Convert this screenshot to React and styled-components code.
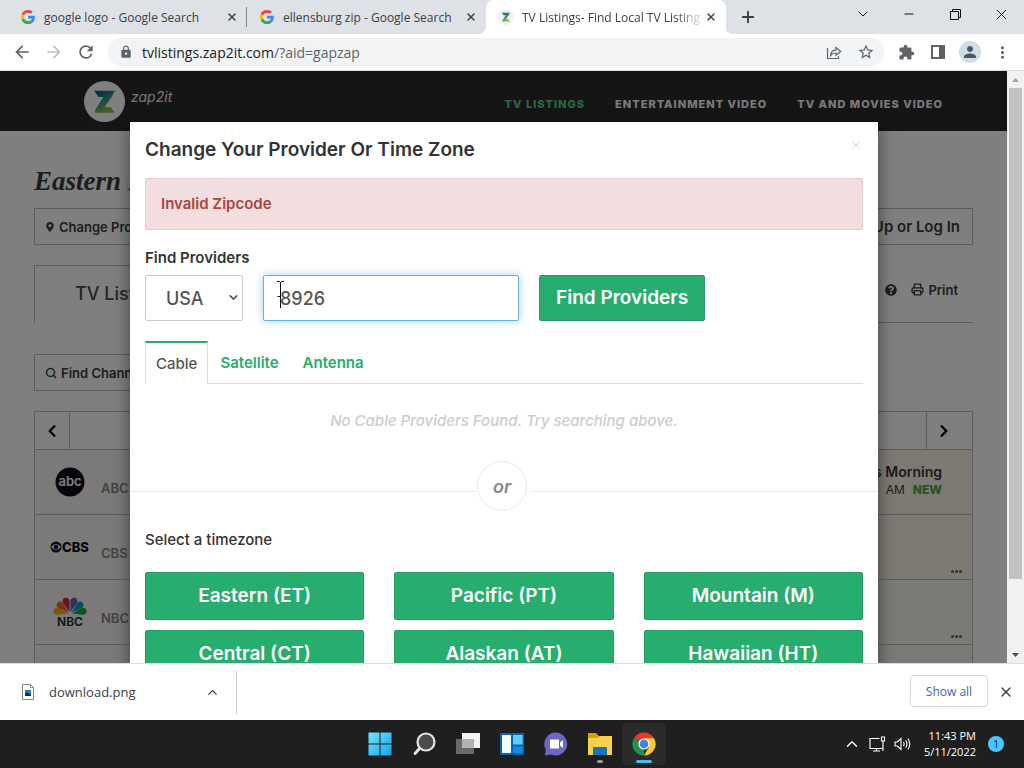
import React from "react";
import styled, { createGlobalStyle, css } from "styled-components";
import { Search, Printer, X, Plus, ChevronDown, ChevronUp, Minus } from "lucide-react";
import { MdArrowBack, MdArrowForward, MdRefresh, MdLock, MdStarBorder, MdExtension, MdMoreVert, MdPerson } from "react-icons/md";
import { FaMapMarkerAlt, FaQuestionCircle, FaChevronLeft, FaChevronRight } from "react-icons/fa";

const brandFont = `Inter, "Liberation Sans", sans-serif`;
const systemFont = `"Open Sans", "Noto Sans", sans-serif`;
const green = "#27ae6e";

const GlobalStyle = createGlobalStyle`
  *, *::before, *::after { box-sizing: border-box; }
  body { margin: 0; background: #fff; }
  button, input, select { font: inherit; color: inherit; margin: 0; }
  button { padding: 0; border: 0; background: none; }
  svg { display: block; flex: none; }
  h1, h2, p { margin: 0; }
  a { color: inherit; text-decoration: none; }
`;

const Desktop = styled.div`
  display: flex;
  flex-direction: column;
  height: 100vh;
  font-family: ${systemFont};
  color: #3c4043;
`;

/* ---------- browser frame ---------- */

const TabStrip = styled.div`
  display: flex;
  flex: none;
  height: 34px;
  padding-left: 8px;
  background: #dee1e6;
`;

const BrowserTab = styled.div`
  position: relative;
  display: flex;
  align-items: center;
  flex: 0 1 239px;
  min-width: 0;
  padding: 0 8px 0 12px;
  font-size: 12px;
  border-right: 1px solid transparent;
  ${(p) =>
    p.$divided &&
    css`
      border-image: linear-gradient(transparent 8px, #84878c 8px, #84878c 26px, transparent 26px) 1;
    `}
  ${(p) =>
    p.$active &&
    css`
      flex-basis: 240px;
      background: #fff;
      border-radius: 8px 8px 0 0;
      &::before, &::after {
        content: "";
        position: absolute;
        bottom: 0;
        width: 8px;
        height: 8px;
      }
      &::before { left: -8px; background: radial-gradient(circle at 0 0, transparent 8px, #fff 8px); }
      &::after { right: -8px; background: radial-gradient(circle at 100% 0, transparent 8px, #fff 8px); }
    `}
`;

const TabTitle = styled.span`
  flex: 1;
  min-width: 0;
  padding-left: 8px;
  overflow: hidden;
  white-space: nowrap;
  ${(p) => p.$faded && css`mask-image: linear-gradient(90deg, #000 84%, transparent);`}
`;

const NewTab = styled.button`
  display: grid;
  place-items: center;
  width: 44px;
  color: #3c4043;
`;

const WindowControls = styled.div`
  display: flex;
  margin-left: auto;
  height: 28px;
  color: #111;
`;

const WindowButton = styled.button`
  display: grid;
  place-items: center;
  width: 46px;
`;

const Toolbar = styled.div`
  display: flex;
  align-items: center;
  gap: 6px;
  flex: none;
  height: 37px;
  padding: 0 6px;
  border-bottom: 1px solid #dadce0;
  color: #5f6368;
`;

const ButtonGroup = styled.div`
  display: flex;
`;

const ToolButton = styled.button`
  display: grid;
  place-items: center;
  width: 32px;
  height: 28px;
  color: ${(p) => (p.$dim ? "#bdc1c6" : "#5f6368")};
`;

const Omnibox = styled.div`
  display: flex;
  align-items: center;
  flex: 1;
  height: 28px;
  padding: 0 2px 0 11px;
  border-radius: 14px;
  background: #f1f3f4;
`;

const Address = styled.span`
  flex: 1;
  padding-left: 9px;
  font-size: 14px;
  color: #5f6368;
  b { font-weight: 400; color: #202124; }
`;

const Avatar = styled.span`
  display: grid;
  place-items: center;
  width: 22px;
  height: 22px;
  border-radius: 50%;
  background: #d3dce3;
  color: #47576a;
`;

const Viewport = styled.div`
  display: flex;
  flex: 1;
  min-height: 0;
`;

const Scrollbar = styled.div`
  display: flex;
  flex-direction: column;
  align-items: center;
  flex: none;
  width: 17px;
  background: #f1f1f1;
`;

const ScrollArrow = styled.div`
  display: grid;
  place-items: center;
  width: 17px;
  height: 17px;
  color: ${(p) => (p.$muted ? "#a3a3a3" : "#505050")};
`;

const ScrollTrack = styled.div`
  flex: 1;
  width: 13px;
`;

const ScrollThumb = styled.div`
  height: 88%;
  background: #c1c1c1;
`;

/* ---------- listings page ---------- */

const Stage = styled.div`
  position: relative;
  flex: 1;
  min-width: 0;
  overflow: hidden;
  font-family: ${brandFont};
`;

const SiteHeader = styled.header`
  display: flex;
  justify-content: space-between;
  height: 60px;
  padding: 0 64px 0 84px;
  background: #2a2a2a;
`;

const Brand = styled.a`
  display: flex;
  gap: 6px;
  padding-top: 10px;
  font-size: 14px;
  line-height: 32px;
  font-style: italic;
  color: #eee;
`;

const Nav = styled.nav`
  display: flex;
  align-items: center;
  gap: 30px;
  padding-top: 6px;
  font-size: 11px;
  font-weight: 800;
  letter-spacing: 1px;
`;

const NavLink = styled.a`
  white-space: nowrap;
  color: ${(p) => (p.$current ? "#58d082" : "#f4f4f4")};
`;

const PageBody = styled.main`
  padding: 34px 34px 0;
  color: #3a3a3a;
`;

const PageTitle = styled.h1`
  height: 32px;
  font: italic 700 27px/32px "Liberation Serif", serif;
  white-space: nowrap;
`;

const ActionRow = styled.div`
  display: flex;
  justify-content: space-between;
  margin-top: 11px;
`;

const OutlineButton = styled.button`
  display: flex;
  align-items: center;
  gap: 4px;
  height: 37px;
  padding: 0 12px 0 10px;
  border: 1px solid #bbb;
  font-size: ${(p) => (p.$large ? 15 : 13)}px;
  font-weight: 600;
`;

const SectionTabs = styled.div`
  display: flex;
  height: 58px;
  margin-top: 20px;
`;

const SectionTab = styled.div`
  width: 180px;
  padding-left: 40px;
  border: 1px solid #bbb;
  border-bottom: 0;
  font-size: 18px;
  font-weight: 500;
  line-height: 56px;
  color: #4a4a4a;
`;

const SectionTools = styled.div`
  display: flex;
  justify-content: flex-end;
  align-items: center;
  gap: 14px;
  flex: 1;
  padding: 0 15px 8px 0;
  border-bottom: 1px solid #bbb;
  font-size: 13px;
  font-weight: 600;
`;

const Tool = styled.button`
  display: flex;
  align-items: center;
  gap: 4px;
`;

const FinderRow = styled.div`
  display: flex;
  margin: 31px 0 20px;
`;

const Guide = styled.table`
  width: 100%;
  table-layout: fixed;
  border-collapse: collapse;
  td, th { padding: 0; border: 1px solid #bbb; font-weight: 400; }
`;

const GuideHead = styled.tr`
  height: 38px;
  button { display: flex; width: 34px; justify-content: center; color: #000; }
`;

const GuideRow = styled.tr`
  height: 65px;
`;

const ChannelHead = styled.th`
  background: #f6f5f2;
`;

const Channel = styled.div`
  display: flex;
  align-items: center;
  gap: 10px;
  padding-left: 14px;
  height: 64px;
  font-size: 13px;
  font-weight: 600;
  color: #888;
  span { padding-top: 12px; }
`;

const ShowCell = styled.td`
  background: ${(p) => (p.$warm ? "#f9f4e6" : "#f5f4ef")};
`;

const Show = styled.div`
  display: flex;
  flex-direction: column;
  align-items: flex-end;
  height: 64px;
  padding: 13px 30px 0 0;
  font-size: 14px;
  line-height: 18px;
  font-weight: 600;
`;

const ShowTime = styled.div`
  display: flex;
  gap: 8px;
  font-size: 12px;
  font-weight: 400;
  b { font-weight: 800; color: #48a848; }
`;

const More = styled.div`
  display: flex;
  justify-content: flex-end;
  align-items: flex-end;
  gap: 1px;
  height: 64px;
  padding: 0 10px 6px 0;
  i { width: 3px; height: 3px; border-radius: 50%; background: #3b7352; }
`;

/* ---------- provider dialog ---------- */

const Backdrop = styled.div`
  position: absolute;
  inset: 0;
  display: flex;
  justify-content: center;
  padding: 51px 129px 0 130px;
  background: rgba(0, 0, 0, 0.5);
`;

const Dialog = styled.section`
  flex: 1;
  max-width: 900px;
  height: max-content;
  padding: 0 15px 30px;
  background: #fff;
  box-shadow: 0 5px 15px rgba(0, 0, 0, 0.5);
  color: #333;
`;

const DialogHeader = styled.div`
  display: flex;
  justify-content: space-between;
  height: 56px;
  h2 { font-size: 19px; font-weight: 600; line-height: 56px; }
`;

const CloseButton = styled.button`
  height: 46px;
  color: #ccc;
`;

const Alert = styled.div`
  height: 52px;
  padding: 0 15px;
  border: 1px solid #ebccd1;
  background: #f2dede;
  color: #a94442;
  font-size: 15px;
  font-weight: 600;
  line-height: 50px;
`;

const FieldLabel = styled.label`
  display: block;
  padding-top: 18px;
  font-size: 15px;
  font-weight: 600;
  line-height: 20px;
`;

const SearchForm = styled.form`
  display: flex;
  gap: 20px;
  margin-top: 7px;
  height: 46px;
  font-size: 18px;
  color: #555;
`;

const SelectWrap = styled.div`
  position: relative;
  width: 98px;
  select {
    appearance: none;
    width: 100%;
    height: 100%;
    padding: 0 20px;
    border: 1px solid #ccc;
    border-radius: 2px;
    background: #fff;
    font-weight: 500;
  }
  svg { position: absolute; right: 3px; top: 16px; }
`;

const ZipWrap = styled.div`
  position: relative;
  width: 256px;
  input {
    width: 100%;
    height: 100%;
    padding: 0 16px;
    border: 1px solid #66afe9;
    border-radius: 2px;
    outline: 0;
    box-shadow: 0 0 8px rgba(102, 175, 233, 0.6);
    font-weight: 500;
  }
  svg { position: absolute; left: 13px; top: 6px; }
`;

const GreenButton = styled.button`
  height: ${(p) => (p.$compact ? 46 : 48)}px;
  padding: 0 16px;
  border: 1px solid #249c63;
  border-radius: 2px;
  background: ${green};
  color: #fff;
  font-size: 19px;
  font-weight: 600;
  line-height: 20px;
  white-space: nowrap;
`;

const ProviderTabs = styled.div`
  display: flex;
  height: 43px;
  margin-top: 20px;
  border-bottom: 1px solid #ddd;
`;

const ProviderTab = styled.button`
  padding: 0 12px;
  color: ${green};
  font-size: 15px;
  font-weight: 600;
  ${(p) =>
    p.$active &&
    css`
      height: 43px;
      padding: 0 10px;
      border: 1px solid #ddd;
      border-top: 2px solid ${green};
      border-bottom: 0;
      background: #fff;
      color: #555;
      font-weight: 500;
    `}
`;

const Empty = styled.p`
  padding: 27px 0 30px;
  font-size: 15px;
  font-style: italic;
  font-weight: 500;
  line-height: 20px;
  text-align: center;
  color: #ccc;
`;

const Divider = styled.div`
  display: flex;
  align-items: center;
  margin: 0 -15px 1px;
  padding-right: 4px;
  &::before, &::after {
    content: "";
    flex: 1;
    margin-top: 10px;
    border-top: 1px solid #e8e8e8;
  }
  &::after { margin-right: -4px; }
`;

const OrBadge = styled.span`
  width: 50px;
  height: 50px;
  margin-right: 4px;
  border: 1px solid #e8e8e8;
  border-radius: 50%;
  font-size: 18px;
  font-style: italic;
  font-weight: 600;
  line-height: 50px;
  text-align: center;
  color: #888;
  box-shadow: 4px 0 #fff;
`;

const ZoneHeading = styled(FieldLabel).attrs({ as: "h2" })`
  margin-bottom: 22px;
  font-weight: 500;
`;

const ZoneGrid = styled.div`
  display: grid;
  grid-template-columns: repeat(3, 1fr);
  gap: 10px 30px;
`;

/* ---------- downloads shelf and task bar ---------- */

const Shelf = styled.div`
  display: flex;
  align-items: center;
  flex: none;
  height: 57px;
  padding-right: 10px;
  border-top: 1px solid #dadce0;
  background: #fff;
`;

const Download = styled.div`
  display: flex;
  align-items: center;
  gap: 14px;
  width: 237px;
  height: 43px;
  padding: 0 16px 0 21px;
  border-right: 1px solid #c8cace;
  font-size: 13px;
  span { flex: 1; }
`;

const ShowAll = styled.button`
  width: 78px;
  height: 32px;
  margin: 0 10px 2px auto;
  border: 1px solid #d5d8dc;
  border-radius: 4px;
  font-size: 12px;
  font-weight: 500;
  color: #3a66bd;
`;

const TaskBar = styled.footer`
  display: grid;
  grid-template-columns: 1fr auto 1fr;
  align-items: center;
  flex: none;
  height: 48px;
  background: #1f1f1f;
  color: #fff;
`;

const AppRow = styled.div`
  display: flex;
  grid-column: 2;
`;

const AppButton = styled.button`
  position: relative;
  display: grid;
  place-items: center;
  width: 44px;
  height: 42px;
  border-radius: 4px;
  background: ${(p) => (p.$mark === "active" ? "#2b2b2b" : "none")};
  &::after {
    content: "";
    position: absolute;
    bottom: 2px;
    left: 50%;
    width: ${(p) => (p.$mark === "active" ? 16 : 6)}px;
    height: 3px;
    border-radius: 2px;
    transform: translateX(-50%);
    background: ${(p) => ({ active: "#56b5e8", open: "#9a9a9a" })[p.$mark] || "none"};
  }
`;

const Tray = styled.div`
  display: flex;
  justify-content: flex-end;
  align-items: center;
  gap: 8px;
  padding-right: 20px;
`;

const Clock = styled.div`
  padding: 0 4px 0 5px;
  font-size: 11px;
  line-height: 16px;
  text-align: right;
`;

const Notice = styled.span`
  width: 16px;
  height: 16px;
  border-radius: 50%;
  background: #4cc2ff;
  color: #123;
  font-size: 10px;
  line-height: 16px;
  text-align: center;
`;

/* ---------- drawings ---------- */

const GoogleIcon = () => (
  <svg width="16" height="16" viewBox="-3 -3 54 54">
    <path fill="#ea4335" d="M24 9.5c3.54 0 6.71 1.22 9.21 3.6l6.85-6.85C35.9 2.38 30.47 0 24 0 14.62 0 6.51 5.38 2.56 13.22l7.98 6.19C12.43 13.72 17.74 9.5 24 9.5z" />
    <path fill="#4285f4" d="M46.98 24.55c0-1.57-.15-3.09-.38-4.55H24v9.02h12.94c-.58 2.96-2.26 5.48-4.78 7.18l7.73 6c4.51-4.18 7.09-10.36 7.09-17.65z" />
    <path fill="#fbbc05" d="M10.53 28.59A14.5 14.5 0 0 1 9.77 24c0-1.6.27-3.14.76-4.59l-7.98-6.19A23.9 23.9 0 0 0 0 24c0 3.88.92 7.54 2.56 10.78z" />
    <path fill="#34a853" d="M24 48c6.48 0 11.93-2.13 15.89-5.81l-7.73-6c-2.15 1.45-4.92 2.3-8.16 2.3-6.26 0-11.57-4.22-13.47-9.91l-7.98 6.19C6.51 42.62 14.62 48 24 48z" />
  </svg>
);

const ZapIcon = ({ size, small }) => (
  <svg width={size} height={size} viewBox="0 0 40 40">
    <circle cx="20" cy="20" r="20" fill={small ? "#f1f3f2" : "#fff"} />
    <defs>
      <linearGradient id="zap" x1="0" y1="0" x2=".5" y2="1">
        <stop offset="0" stopColor="#16468c" />
        <stop offset=".5" stopColor="#249688" />
        <stop offset="1" stopColor="#9bb83c" />
      </linearGradient>
    </defs>
    <path d="M10 9.500h20l-3 6-7 10h6l4 5.500H11v-3l8-12.500h-5z" fill="url(#zap)" />
  </svg>
);

const RestoreIcon = () => (
  <svg width="11" height="11" viewBox="0 0 11 11" fill="none" stroke="currentColor">
    <path d="M.5 2.500h8v8h-8zM2.500 2.500v-2h8v8h-2" />
  </svg>
);

const ShareIcon = () => (
  <svg width="16" height="16" viewBox="0 0 16 16" fill="none" stroke="currentColor" strokeWidth="1.200">
    <path d="M1.500 4v10.500h11V12M4.500 11.500c.4-3.500 2-5.500 5.500-5.700V3.500l4.700 4L10 11.300V9C7.500 9 6 9.700 4.500 11.500z" />
  </svg>
);

const SidePanelIcon = () => (
  <svg width="14" height="14" viewBox="0 0 14 14">
    <path fillRule="evenodd" fill="currentColor" d="M0 0h14v14H0zM2 2v10h6V2z" />
  </svg>
);

const Triangle = ({ down }) => (
  <svg width="7" height="4" viewBox="0 0 7 4">
    <path fill="currentColor" d={down ? "M0 0h7L3.500 4z" : "M0 4h7L3.500 0z"} />
  </svg>
);

const AbcLogo = () => (
  <svg width="42" height="30" viewBox="0 0 42 30">
    <circle cx="21" cy="15" r="14.500" fill="#0b0d18" />
    <text x="21" y="19" textAnchor="middle" fontFamily="Inter" fontWeight="600" fontSize="13" fill="#fff">abc</text>
  </svg>
);

const CbsLogo = () => (
  <svg width="42" height="20" viewBox="0 0 42 20">
    <circle cx="7" cy="10" r="5.500" fill="#0b0d18" />
    <path d="M2 10q5-6 10 0q-5 6-10 0z" fill="#fff" />
    <circle cx="7" cy="10" r="2.300" fill="#0b0d18" />
    <text x="13" y="15" fontFamily="Inter" fontWeight="800" fontSize="13" fill="#0b0d18">CBS</text>
  </svg>
);

const petals = [["#f5b21b", -78], ["#ed6b1f", -48], ["#d6203b", -17], ["#6460aa", 17], ["#1595d3", 48], ["#1ba64a", 78]];

const NbcLogo = () => (
  <svg width="42" height="36" viewBox="0 0 42 36">
    {petals.map(([fill, angle]) => (
      <path key={fill} fill={fill} transform={`rotate(${angle} 21 20)`} d="M21 18l-3.200-10a3.500 3.500 0 1 1 6.400 0z" />
    ))}
    <text x="21" y="32" textAnchor="middle" fontFamily="Inter" fontWeight="600" fontSize="12" fill="#222">NBC</text>
  </svg>
);

const IBeam = () => (
  <svg width="9" height="28" viewBox="0 0 9 28" fill="none" stroke="#111">
    <path d="M1 .5h2.500l1 1 1-1H8M4.500 1v26M1.500 15.500h3" />
  </svg>
);

const FileIcon = () => (
  <svg width="14" height="16" viewBox="0 0 14 16">
    <path d="M1.500.5h8l3 3v12h-11z" fill="#fff" stroke="#8a8a8a" />
    <path d="M9.500.5v3h3" fill="none" stroke="#8a8a8a" />
    <path d="M4 6h6v6H4z" fill="#2b7cd0" />
    <path d="M4 10l2-2 4 3v1H4z" fill="#0c2d5e" />
  </svg>
);

const StartIcon = () => (
  <svg width="24" height="24" viewBox="0 0 24 24">
    <defs>
      <linearGradient id="start" gradientUnits="userSpaceOnUse" x1="0" y1="0" x2="24" y2="24">
        <stop offset="0" stopColor="#7be3fb" />
        <stop offset="1" stopColor="#10a3ee" />
      </linearGradient>
    </defs>
    <path fill="url(#start)" d="M.5.500h11v11H.5zM12.500.500h11v11h-11zM.5 12.500h11v11H.5zM12.500 12.500h11v11h-11z" />
  </svg>
);

const SearchAppIcon = () => (
  <svg width="24" height="24" viewBox="0 0 24 24" stroke="#e4e4e4" strokeLinecap="round">
    <circle cx="14" cy="10" r="8.500" fill="#4b4b4b" strokeWidth="2.200" />
    <path d="M7.500 16.500L3 21.500" strokeWidth="3" />
  </svg>
);

const TaskViewIcon = () => (
  <svg width="24" height="24" viewBox="0 0 24 24">
    <path d="M6 1h18v15H6z" fill="#f3f3f3" />
    <path d="M0 7h18v15H0z" fill="#686868" />
    <path d="M6 7h12v9H6z" fill="#b2b2b2" />
  </svg>
);

const WidgetsIcon = () => (
  <svg width="24" height="24" viewBox="0 0 24 24">
    <path d="M0 1h24v22H0z" fill="#0a63ad" />
    <path d="M2 3h9v18H2z" fill="#f5fbff" />
    <path d="M13 3h9.500v9.500H13z" fill="#5fd0fa" />
    <path d="M13 14.500h9.500V21H13z" fill="#128be0" />
  </svg>
);

const ChatIcon = () => (
  <svg width="24" height="24" viewBox="0 0 24 24">
    <path d="M12 .5A11.500 11.500 0 1 1 7 22.500L.8 23.500 2 18A11.500 11.500 0 0 1 12 .5z" fill="#6d67c4" />
    <path d="M6 7.500h9v9H6zM16 10.500l3-2.500v8l-3-2.500z" fill="#fff" />
  </svg>
);

const FolderIcon = () => (
  <svg width="26" height="24" viewBox="0 0 26 24">
    <path d="M1 1h8l3 3h13v6H1z" fill="#d99b10" />
    <path d="M1 6h9l3-2h12v19H1z" fill="#fad04c" />
    <path d="M6 16q0-1 1-1h12q1 0 1 1v7H6z" fill="#1376bd" />
  </svg>
);

const ChromeIcon = () => (
  <svg width="24" height="24" viewBox="0 0 24 24">
    <path d="M12 12L2 6.200A11.500 11.500 0 0 1 22 6.200z" fill="#e33b2e" />
    <path d="M12 12l0 11.500A11.500 11.500 0 0 1 2 6.200z" fill="#1e9447" />
    <path d="M12 6.200H22A11.500 11.500 0 0 1 12 23.500l5-8.700z" fill="#fcc934" />
    <circle cx="12" cy="12" r="5.600" fill="#fff" />
    <circle cx="12" cy="12" r="4.400" fill="#3f83ee" />
  </svg>
);

const NetworkIcon = () => (
  <svg width="17" height="16" viewBox="0 0 17 16" fill="none" stroke="currentColor" strokeWidth="1.100">
    <path d="M10.500 2.500H1v10h13V8M4 15h7M7.500 12.500V15M12.500 1h3v4h-3zM14 5v10" />
  </svg>
);

const SpeakerIcon = () => (
  <svg width="17" height="16" viewBox="0 0 17 16" fill="none" stroke="currentColor" strokeWidth="1.100">
    <path d="M1 6h2.500L7 2.500v11L3.500 10H1zM9.500 6q1.200 2 0 4M11.700 4.200q2.400 3.800 0 7.600M13.900 2.500q3.600 5.500 0 11" />
  </svg>
);

/* ---------- page ---------- */

const tabs = [
  { title: "google logo - Google Search", icon: <GoogleIcon />, divided: true },
  { title: "ellensburg zip - Google Search", icon: <GoogleIcon /> },
  { title: "TV Listings- Find Local TV Listing", icon: <ZapIcon size={16} small />, active: true },
];

const channels = [
  { name: "ABC", logo: <AbcLogo />, warm: true, show: "America This Morning" },
  { name: "CBS", logo: <CbsLogo />, warm: true },
  { name: "NBC", logo: <NbcLogo /> },
  { name: "", logo: null },
];

const zones = ["Eastern (ET)", "Pacific (PT)", "Mountain (M)", "Central (CT)", "Alaskan (AT)", "Hawaiian (HT)"];

const apps = [
  { name: "Start", icon: <StartIcon /> },
  { name: "Search", icon: <SearchAppIcon /> },
  { name: "Task view", icon: <TaskViewIcon /> },
  { name: "Widgets", icon: <WidgetsIcon /> },
  { name: "Chat", icon: <ChatIcon /> },
  { name: "File Explorer", icon: <FolderIcon />, mark: "open" },
  { name: "Chrome", icon: <ChromeIcon />, mark: "active" },
];

function BrowserFrame() {
  return (
    <>
      <TabStrip>
        {tabs.map((t) => (
          <BrowserTab key={t.title} $active={t.active} $divided={t.divided}>
            {t.icon}
            <TabTitle $faded={t.active}>{t.title}</TabTitle>
            <button aria-label="Close tab"><X size={12} strokeWidth={3} /></button>
          </BrowserTab>
        ))}
        <NewTab aria-label="New tab"><Plus size={18} strokeWidth={2.5} /></NewTab>
        <WindowControls>
          <WindowButton aria-label="Search tabs"><ChevronDown size={16} strokeWidth={1.5} /></WindowButton>
          <WindowButton aria-label="Minimize"><Minus size={14} strokeWidth={1.7} /></WindowButton>
          <WindowButton aria-label="Restore"><RestoreIcon /></WindowButton>
          <WindowButton aria-label="Close"><X size={17} strokeWidth={1.4} /></WindowButton>
        </WindowControls>
      </TabStrip>
      <Toolbar>
        <ButtonGroup>
          <ToolButton aria-label="Back"><MdArrowBack size={20} /></ToolButton>
          <ToolButton aria-label="Forward" $dim><MdArrowForward size={20} /></ToolButton>
          <ToolButton aria-label="Reload"><MdRefresh size={20} /></ToolButton>
        </ButtonGroup>
        <Omnibox>
          <MdLock size={14} />
          <Address><b>tvlistings.zap2it.com</b>/?aid=gapzap</Address>
          <ToolButton aria-label="Share"><ShareIcon /></ToolButton>
          <ToolButton aria-label="Bookmark"><MdStarBorder size={18} /></ToolButton>
        </Omnibox>
        <ButtonGroup>
          <ToolButton aria-label="Extensions"><MdExtension size={17} /></ToolButton>
          <ToolButton aria-label="Side panel"><SidePanelIcon /></ToolButton>
          <ToolButton aria-label="Profile"><Avatar><MdPerson size={18} /></Avatar></ToolButton>
          <ToolButton aria-label="Menu"><MdMoreVert size={19} /></ToolButton>
        </ButtonGroup>
      </Toolbar>
    </>
  );
}

function ListingsPage() {
  return (
    <>
      <SiteHeader>
        <Brand href="#"><ZapIcon size={41} /><span>zap2it</span></Brand>
        <Nav>
          <NavLink href="#" $current>TV LISTINGS</NavLink>
          <NavLink href="#">ENTERTAINMENT VIDEO</NavLink>
          <NavLink href="#">TV AND MOVIES VIDEO</NavLink>
        </Nav>
      </SiteHeader>
      <PageBody>
        <PageTitle>Eastern Daylight</PageTitle>
        <ActionRow>
          <OutlineButton><FaMapMarkerAlt size={10} />Change Provider</OutlineButton>
          <OutlineButton $large>Sign Up or Log In</OutlineButton>
        </ActionRow>
        <SectionTabs>
          <SectionTab>TV Listings</SectionTab>
          <SectionTools>
            <Tool aria-label="Help"><FaQuestionCircle size={12} /></Tool>
            <Tool><Printer size={13} strokeWidth={2.5} />Print</Tool>
          </SectionTools>
        </SectionTabs>
        <FinderRow>
          <OutlineButton><Search size={12} strokeWidth={3} />Find Channel</OutlineButton>
        </FinderRow>
        <Guide>
          <colgroup>
            <col style={{ width: 35 }} />
            <col style={{ width: 85 }} />
            <col />
            <col style={{ width: 46 }} />
          </colgroup>
          <tbody>
            <GuideHead>
              <th><button aria-label="Earlier"><FaChevronLeft size={14} /></button></th>
              <th colSpan={2} />
              <th><button aria-label="Later"><FaChevronRight size={14} /></button></th>
            </GuideHead>
            {channels.map((c, i) => (
              <GuideRow key={i}>
                <ChannelHead colSpan={2}><Channel>{c.logo}<span>{c.name}</span></Channel></ChannelHead>
                <ShowCell colSpan={2} $warm={c.warm}>
                  {c.show ? (
                    <Show>{c.show}<ShowTime>AM <b>NEW</b></ShowTime></Show>
                  ) : (
                    <More><i /><i /><i /></More>
                  )}
                </ShowCell>
              </GuideRow>
            ))}
          </tbody>
        </Guide>
      </PageBody>
    </>
  );
}

function ProviderDialog() {
  return (
    <Backdrop>
      <Dialog role="dialog" aria-labelledby="dialog-title">
        <DialogHeader>
          <h2 id="dialog-title">Change Your Provider Or Time Zone</h2>
          <CloseButton aria-label="Close"><X size={14} strokeWidth={1.5} /></CloseButton>
        </DialogHeader>
        <Alert role="alert">Invalid Zipcode</Alert>
        <FieldLabel htmlFor="zip">Find Providers</FieldLabel>
        <SearchForm onSubmit={(e) => e.preventDefault()}>
          <SelectWrap>
            <select aria-label="Country" defaultValue="USA"><option>USA</option></select>
            <ChevronDown size={13} strokeWidth={3} />
          </SelectWrap>
          <ZipWrap>
            <input id="zip" type="text" defaultValue="8926" />
            <IBeam />
          </ZipWrap>
          <GreenButton $compact>Find Providers</GreenButton>
        </SearchForm>
        <ProviderTabs>
          <ProviderTab $active>Cable</ProviderTab>
          <ProviderTab>Satellite</ProviderTab>
          <ProviderTab>Antenna</ProviderTab>
        </ProviderTabs>
        <Empty>No Cable Providers Found. Try searching above.</Empty>
        <Divider><OrBadge>or</OrBadge></Divider>
        <ZoneHeading>Select a timezone</ZoneHeading>
        <ZoneGrid>
          {zones.map((z) => <GreenButton key={z}>{z}</GreenButton>)}
        </ZoneGrid>
      </Dialog>
    </Backdrop>
  );
}

export default function App() {
  return (
    <Desktop>
      <GlobalStyle />
      <BrowserFrame />
      <Viewport>
        <Stage>
          <ListingsPage />
          <ProviderDialog />
        </Stage>
        <Scrollbar>
          <ScrollArrow $muted><Triangle /></ScrollArrow>
          <ScrollTrack><ScrollThumb /></ScrollTrack>
          <ScrollArrow><Triangle down /></ScrollArrow>
        </Scrollbar>
      </Viewport>
      <Shelf>
        <Download>
          <FileIcon />
          <span>download.png</span>
          <button aria-label="Download options"><ChevronUp size={15} strokeWidth={2} /></button>
        </Download>
        <ShowAll>Show all</ShowAll>
        <button aria-label="Close downloads"><X size={16} strokeWidth={2.2} /></button>
      </Shelf>
      <TaskBar>
        <AppRow>
          {apps.map((a) => <AppButton key={a.name} aria-label={a.name} $mark={a.mark}>{a.icon}</AppButton>)}
        </AppRow>
        <Tray>
          <ChevronUp size={18} strokeWidth={1.8} />
          <NetworkIcon />
          <SpeakerIcon />
          <Clock>11:43 PM<br />5/11/2022</Clock>
          <Notice>1</Notice>
        </Tray>
      </TaskBar>
    </Desktop>
  );
}
